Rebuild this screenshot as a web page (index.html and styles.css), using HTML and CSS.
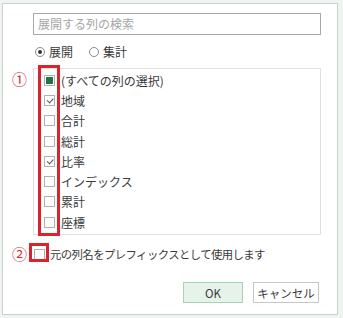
FILE: index.html
```html
<!DOCTYPE html>
<html lang="ja">
<head>
<meta charset="utf-8">
<link rel="stylesheet" href="styles.css">
</head>
<body>
<div class="dialog">
  <div class="search">展開する列の検索</div>
  <div class="radios">
    <label class="radio"><span class="dot on"></span>展開</label>
    <label class="radio"><span class="dot"></span>集計</label>
  </div>
  <div class="listwrap">
    <span class="num num1">①</span>
    <span class="mark mark1"></span>
    <div class="list">
      <div class="row"><span class="cb part"></span>(すべての列の選択)</div>
      <div class="row"><span class="cb chk"></span>地域</div>
      <div class="row"><span class="cb"></span>合計</div>
      <div class="row"><span class="cb"></span>総計</div>
      <div class="row"><span class="cb chk"></span>比率</div>
      <div class="row"><span class="cb"></span>インデックス</div>
      <div class="row"><span class="cb"></span>累計</div>
      <div class="row"><span class="cb"></span>座標</div>
    </div>
  </div>
  <div class="prefix">
    <span class="num num2">②</span>
    <span class="mark mark2"></span>
    <span class="cb"></span><span class="ptext">元の列名をプレフィックスとして使用します</span>
  </div>
  <div class="buttons">
    <button class="btn ok">OK</button>
    <button class="btn">キャンセル</button>
  </div>
</div>
</body>
</html>
```

FILE: styles.css
```css
html, body {
  margin: 0;
  padding: 0;
}
body {
  width: 343px;
  height: 318px;
  background: #eef5f0;
  padding: 3px 0 0 2px;
  box-sizing: border-box;
  font-family: "Noto Sans CJK JP", "Noto Sans", sans-serif;
  font-size: 12px;
  color: #3a3a3a;
}
.dialog {
  width: 336px;
  height: 312px;
  box-sizing: border-box;
  background: #fff;
  border: 1px solid #cfcfcf;
  padding: 9px 16px 0 30px;
  display: flex;
  flex-direction: column;
}
.search {
  height: 22px;
  box-sizing: border-box;
  border: 1px solid #a8a8a8;
  padding: 0 4px;
  line-height: 20px;
  color: #a6a6a6;
  font-size: 12px;
}
.radios {
  display: flex;
  gap: 16px;
  height: 33px;
  align-items: center;
  padding-left: 2px;
}
.radio {
  display: flex;
  align-items: center;
  gap: 4px;
}
.dot {
  width: 10px;
  height: 10px;
  box-sizing: border-box;
  border: 1px solid #8a8a8a;
  border-radius: 50%;
  display: flex;
  align-items: center;
  justify-content: center;
}
.dot.on::after {
  content: "";
  width: 4px;
  height: 4px;
  border-radius: 50%;
  background: #333;
}
.listwrap {
  position: relative;
}
.list {
  height: 167px;
  box-sizing: border-box;
  border: 1px solid #e0e0e0;
  padding: 1px 0 0 10px;
}
.row {
  height: 20.3px;
  display: flex;
  align-items: center;
  gap: 6px;
}
.cb {
  width: 11px;
  height: 11px;
  box-sizing: border-box;
  border: 1px solid #b0b0b0;
  background: #fff;
  display: flex;
  align-items: center;
  justify-content: center;
  flex: none;
}
.cb.part::after {
  content: "";
  width: 7px;
  height: 7px;
  background: #217346;
}
.cb.chk::after {
  content: "";
  width: 5px;
  height: 2.5px;
  border-left: 1.5px solid #555;
  border-bottom: 1.5px solid #555;
  transform: translateY(-1px) rotate(-48deg);
}
.num {
  position: absolute;
  color: #d9232e;
  font-size: 15px;
  line-height: 16px;
}
.num1 {
  left: -21px;
  top: 3px;
}
.mark {
  position: absolute;
  border: 3px solid #d9232e;
  box-sizing: border-box;
}
.mark1 {
  left: 5px;
  top: -3px;
  width: 22px;
  height: 171px;
}
.prefix {
  position: relative;
  display: flex;
  align-items: center;
  gap: 5px;
  height: 38px;
  padding-left: 1px;
}
.ptext {
  font-size: 11.4px;
  letter-spacing: -0.6px;
}
.num2 {
  left: -21px;
  top: 11px;
}
.mark2 {
  left: -4px;
  top: 8px;
  width: 20px;
  height: 19px;
}
.buttons {
  display: flex;
  justify-content: flex-end;
  gap: 10px;
  margin-top: 9px;
  padding-right: 2px;
}
.btn {
  height: 21px;
  box-sizing: border-box;
  border: 1px solid #c6c6c6;
  background: #fff;
  font-family: "Noto Sans CJK JP", "Noto Sans", sans-serif;
  font-size: 11.5px;
  color: #3a3a3a;
  padding: 0;
  width: 66px;
}
.btn.ok {
  width: 60px;
  background: #e6f3ea;
  border-color: #a9d4b4;
}
```
